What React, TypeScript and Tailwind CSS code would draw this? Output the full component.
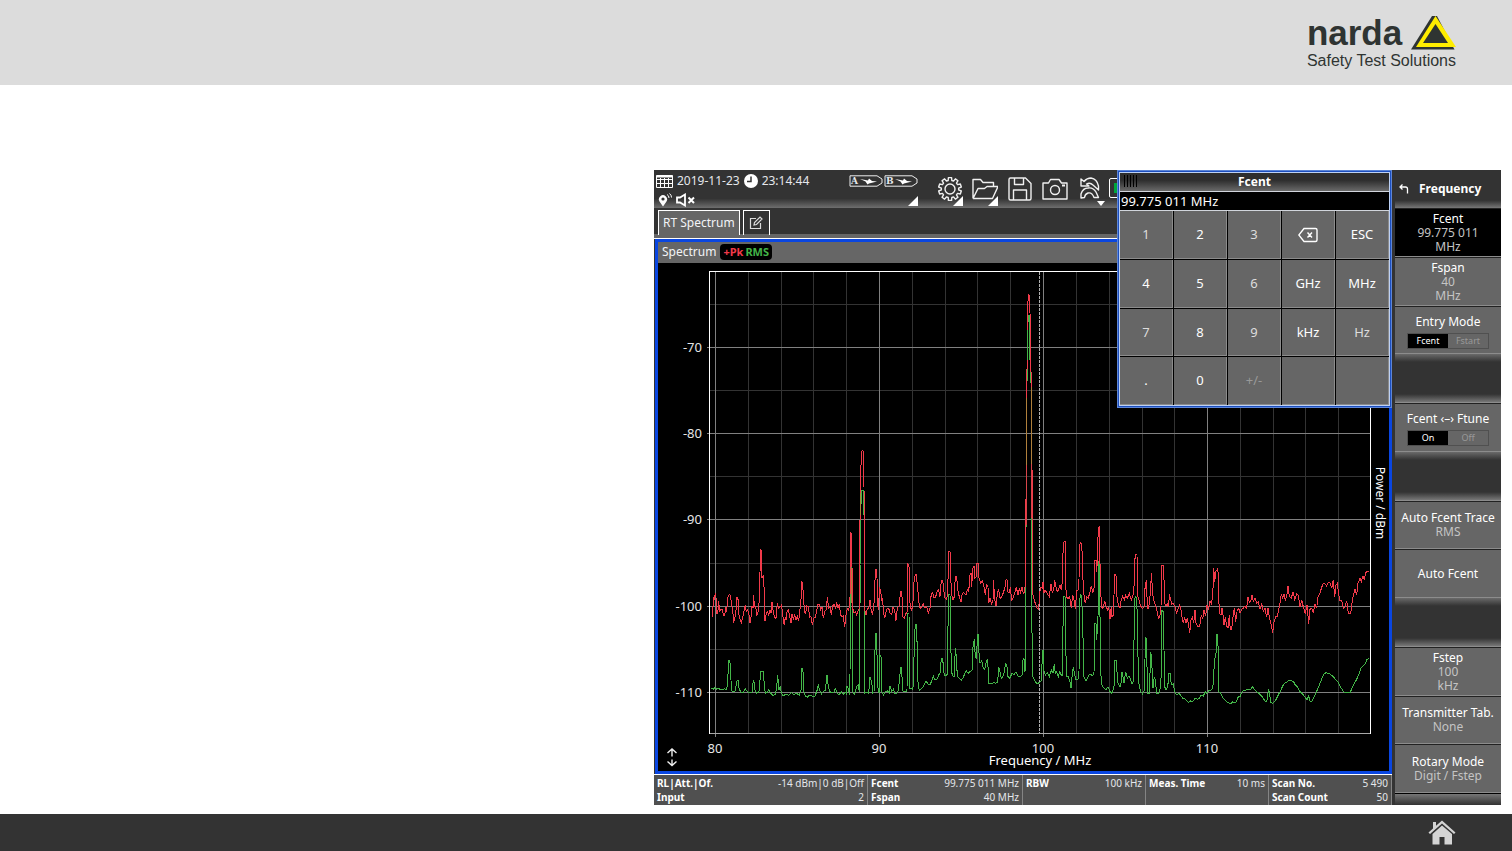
import type { ReactNode } from 'react';

// Trace vertices in thirds of a pixel, counted from the left end of the sweep
const redTrace = [
  {
    offset: 0,
    points:
      '185,348 188,348 190,292 193,300 196,278 198,292 200,340 203,342 206,304 209,335 212,328 218,330 220,345 224,345 227,322 230,335 233,292 237,284 242,286 244,312 248,330 251,368 255,350 258,330 261,292 265,300 267,345 270,358 274,368 280,345 284,322 286,316 289,335 293,328 297,345 300,370 303,350 306,318 309,325 311,286 313,318 317,320 320,345 323,342 326,318 329,290 331,148 333,150 336,235 340,226 343,275 345,362 348,345 352,335 356,345 360,330 363,340 366,306 370,335 374,352 378,355 382,310 386,325 390,322 394,316 397,330 400,358 403,376 406,350 408,360 411,335 415,330 419,350 423,370 426,342 430,358 434,345 438,360 442,348 446,364 449,330 452,320 455,247 458,250 460,290 464,338 467,340 470,318 475,320 479,352 483,350 487,376 491,355 496,352 500,330 504,312 508,312 512,330 516,322 520,355 524,335 529,328 532,292 536,325 540,320 544,345 548,318 552,312 556,325 560,310 564,325 568,312 572,345 576,350 580,348 584,382 588,345 592,325 596,330 600,300 601,98 605,100 606,200 608,325 612,340 616,335 620,345 625,330 629,325 630,60 632,-60 634,-145 637,-149 640,-145 642,-40 643,210 644,330 648,345 652,325 656,325 660,300 664,335 668,342 672,310 675,240 678,208 681,235 683,318 686,330 688,260 692,275 695,300 698,295 700,335 704,355 708,335 712,325 716,325',
  },
  {
    offset: 720,
    points:
      '0,340 5,345 9,322 14,330 18,362 22,325 27,318 30,290 33,273 36,290 38,350 43,355 47,342 51,338 53,188 57,200 60,310 64,330 68,322 72,245 76,222 80,225 82,265 85,280 88,320 92,325 96,318 100,312 105,325 110,320 115,340 120,325 124,280 128,278 132,295 137,290 141,275 146,270 150,290 154,240 158,240 161,270 165,295 170,298 173,275 176,155 180,155 182,230 185,285 189,300 193,290 196,228 200,230 203,270 208,290 213,305 217,280 222,278 228,285 232,270 236,275 240,225 243,218 245,260 248,205 252,197 255,235 258,230 261,190 265,190 267,235 272,250 277,242 282,260 286,285 290,252 294,262 296,308 300,295 305,312 309,300 311,240 313,290 318,318 323,275 326,270 330,295 335,290 340,278 345,262 348,240 351,238 353,275 357,280 361,262 365,300 370,292 375,275 379,262 384,285 388,265 392,278 396,262 400,280 404,275 407,230 409,-200 409,-305 412,-430 413,-590 416,-615 419,-612 420,-560 422,-430 424,-340 426,-100 427,55 428,280 432,298 436,310 441,325 446,328 449,275 453,262 457,265 459,245 461,280 465,270 469,275 474,285 478,290 483,252 487,278 491,270 494,240 498,262 502,275 506,268 510,255 514,270 517,245 519,160 522,125 526,125 527,250 529,290 534,295 539,290 544,325 548,285 552,300 556,328 560,272 564,270 567,240 568,135 573,128 577,160 579,240 582,285 586,310 590,290 595,295 600,275 604,258 608,278 612,265 615,180 618,180 620,215 622,180 625,85 628,82 629,160 632,260 634,320 639,325 644,302 648,318 652,330 656,322 660,358 664,320 666,350 670,345 672,285 674,223 678,226 679,265 682,300 686,318 690,325 694,298 698,288 703,300 707,285 712,295 718,280 724,300 729,285 732,260 734,190 736,163 741,165 742,240 744,290',
  },
  {
    offset: 1440,
    points:
      '30,312 34,322 38,325 42,322 46,250 49,245 51,290 54,328 58,310 62,270 64,220 67,260 70,300 74,308 78,322 82,335 86,358 90,345 93,320 95,195 99,195 102,240 104,310 108,318 112,312 116,322 118,282 121,295 125,312 130,310 135,322 140,340 145,325 149,315 152,325 156,350 160,370 164,352 168,370 172,355 175,370 179,398 183,360 187,352 191,370 195,330 198,370 203,380 209,378 214,345 218,358 222,330 227,348 231,315 236,328 240,302 244,310 248,290 251,205 254,245 257,215 262,208 264,215 266,300 269,342 273,345 276,325 279,345 282,375 286,352 290,378 294,385 298,345 301,390 305,388 309,352 313,325 317,365 322,328 326,325 330,340 335,328 340,325 345,318 350,325 354,290 358,308 362,305 366,285 370,305 375,295 380,310 385,305 390,328 395,312 400,335 405,325 410,352 414,325 418,350 423,372 428,398 432,365 437,350 442,350 446,328 450,310 454,282 458,295 462,282 466,300 470,290 474,258 478,290 484,295 489,275 494,298 500,282 505,285 510,320 515,300 520,320 526,342 531,315 536,372 540,328 545,325 550,340 555,312 560,325 564,290 570,278 575,262 580,250 585,252 590,258 595,246 600,248 605,265 610,240 614,290 618,255 622,250 626,285 630,302 635,300 640,325 645,322 650,302 655,340 662,342 666,310 670,285 675,268 680,285 684,250 690,235 694,245 699,228 703,240 707,218 711,215 716,216',
  },
];

const greenTrace = [
  {
    offset: 0,
    points:
      '183,565 190,568 196,562 200,568 206,565 212,570 218,568 224,566 230,570 233,545 235,500 237,480 240,490 243,540 244,572 250,575 256,572 260,545 264,540 267,565 272,576 280,578 286,566 290,572 296,578 302,578 307,575 310,540 312,545 315,570 320,580 327,575 331,530 333,514 340,514 343,555 346,580 352,578 356,570 362,580 368,586 376,584 380,560 383,525 387,570 391,558 394,580 400,588 408,582 416,586 424,578 432,584 440,580 448,586 453,570 456,505 460,520 462,575 466,588 472,592 478,585 486,588 494,590 500,575 505,556 509,570 514,582 520,574 526,572 531,525 535,560 540,575 546,578 551,578 556,566 562,580 568,584 574,575 580,584 585,575 590,582 591,558 596,570 598,584 600,540 601,202 606,205 606,460 608,575 614,584 620,558 625,555 628,575 629,370 630,195 632,45 634,-20 636,-30 641,-30 642,45 643,420 643,580 650,576 656,580 660,530 665,545 668,580 672,575 675,450 678,400 680,420 683,560 687,580 690,465 693,470 696,575 700,585 706,575 712,572 718,580',
  },
  {
    offset: 720,
    points:
      '0,558 5,575 10,568 14,580 20,582 26,570 28,535 33,502 36,530 38,572 46,576 51,575 52,400 53,340 57,342 58,480 60,565 68,568 71,550 73,400 77,374 80,375 82,470 83,540 88,572 96,565 104,552 108,542 114,552 120,555 126,540 130,528 134,538 140,540 146,525 150,520 154,475 158,475 161,515 165,528 170,525 173,520 174,380 176,283 180,285 182,400 184,515 190,530 193,530 196,445 199,470 202,528 208,535 214,540 220,532 225,520 229,512 234,520 240,515 246,510 249,440 253,418 256,470 260,475 262,405 265,404 267,460 270,490 275,482 280,505 284,508 288,490 292,478 294,500 296,550 302,552 310,548 318,550 323,545 326,500 330,515 334,535 338,530 343,515 347,488 351,500 354,530 360,535 366,518 372,525 378,515 384,528 390,530 396,525 399,480 402,475 404,515 406,510 408,90 409,-100 411,-350 413,-510 415,-555 419,-555 420,-430 424,-330 425,55 426,400 428,530 434,542 442,552 450,546 455,540 457,450 460,450 461,510 466,525 472,518 478,530 484,510 489,520 493,492 496,520 500,515 505,530 509,515 514,525 517,525 519,380 521,290 525,290 527,400 529,530 534,528 540,545 543,565 547,520 550,502 554,525 558,540 564,538 567,515 569,300 572,285 575,290 577,350 580,440 582,530 588,542 594,530 600,522 608,528 612,520 613,420 615,370 618,370 620,420 624,350 626,185 629,185 630,350 632,520 636,555 642,565 648,570 654,560 660,575 666,580 672,560 674,480 678,480 681,515 684,550 690,560 694,545 696,515 700,535 702,548 707,515 712,535 717,528 722,540 726,552 730,545 734,300 736,290 740,292 743,400 745,540',
  },
  {
    offset: 1440,
    points:
      '30,568 32,575 38,582 43,570 45,480 46,412 49,415 51,500 54,580 58,580 60,520 62,460 65,465 67,540 69,565 73,530 76,540 80,580 86,582 91,565 94,520 96,330 100,335 102,450 104,560 108,570 113,560 117,520 120,520 124,555 130,552 134,575 140,584 146,580 152,586 158,595 164,596 170,602 176,608 180,602 184,606 190,602 196,595 202,598 208,596 214,585 220,588 226,575 231,580 236,572 242,572 248,565 251,530 253,485 258,460 260,404 262,404 265,450 266,575 272,580 278,592 284,600 290,605 296,608 302,612 308,605 314,608 320,604 325,590 330,590 335,578 341,570 348,570 356,568 362,568 367,560 373,568 380,575 386,580 392,585 398,592 404,602 410,606 414,580 416,568 419,585 423,608 428,610 434,605 440,595 446,582 452,572 458,558 464,550 470,546 476,542 482,542 490,544 496,555 502,560 508,572 514,578 520,585 526,592 531,600 536,588 540,604 546,604 552,590 558,578 564,565 570,550 576,535 582,522 588,518 596,520 604,525 612,532 618,540 624,545 630,558 636,568 642,576 650,578 660,578 666,565 672,552 680,538 688,520 694,502 700,498 706,492 710,478 716,476',
  },
];

function toPolyline(segments: { offset: number; points: string }[]) {
  return segments
    .map((segment) =>
      segment.points
        .split(' ')
        .map((pair) => {
          const [x, y] = pair.split(',').map(Number);
          return `${((x + segment.offset) / 3 - 8).toFixed(1)},${(y / 3 + 237).toFixed(1)}`;
        })
        .join(' ')
    )
    .join(' ');
}

const minorX = [90, 123, 155, 188, 254, 287, 319, 352, 418, 451, 484, 516, 582, 615, 647, 680];
const majorX = [
  { x: 57, label: '80' },
  { x: 221, label: '90' },
  { x: 385, label: '100' },
  { x: 549, label: '110' },
];
const minorY = [41, 127, 213, 300, 386];
const majorY = [
  { y: 84, label: '-70' },
  { y: 170, label: '-80' },
  { y: 256, label: '-90' },
  { y: 343, label: '-100' },
  { y: 429, label: '-110' },
];

function Chart() {
  return (
    <svg viewBox="0 0 731 508" className="block w-full overflow-visible bg-black" role="img" aria-label="Spectrum">
      <g shapeRendering="crispEdges" fill="none">
        <g stroke="#333">
          {minorX.map((x) => (
            <line key={x} x1={x + 0.5} x2={x + 0.5} y1="9" y2="470" />
          ))}
          {minorY.map((y) => (
            <line key={y} x1="52" x2="712" y1={y + 0.5} y2={y + 0.5} />
          ))}
        </g>
        <g stroke="#808080">
          {majorX.map(({ x }) => (
            <line key={x} x1={x + 0.5} x2={x + 0.5} y1="9" y2="474" />
          ))}
          {majorY.map(({ y }) => (
            <line key={y} x1="49" x2="712" y1={y + 0.5} y2={y + 0.5} />
          ))}
        </g>
        <path d="M51.5 470.5H712" stroke="#a8a8a8" />
        <path d="M51.5 471V8.5H712.5V471" stroke="#fff" />
        <line x1="381.5" x2="381.5" y1="9" y2="470" stroke="#b0b0b0" strokeDasharray="3 1" />
        <polyline points={toPolyline(greenTrace)} stroke="#43b548" />
        <polyline points={toPolyline(redTrace)} stroke="#f23a4a" />
        {/* both traces run over each other on the flanks of the strong carriers */}
        <path d="M202.5 230V252M193.500 305V340M368.5 135V202M373.5 124V201" stroke="#b0803c" />
        <path d="M205.5 228V249M369.5 67V97M371.5 55V97M202.500 302V340M440.500 300V350" stroke="#43b548" />
        <path d="M368.5 202V262M373.5 201V255" stroke="#d8454a" />
      </g>
      <g fill="#e6e6e6" fontFamily="Noto Sans, sans-serif" fontSize="13">
        {majorY.map(({ y, label }) => (
          <text key={label} x="44" y={y + 5} textAnchor="end">
            {label}
          </text>
        ))}
        {majorX.map(({ x, label }) => (
          <text key={label} x={x} y="490" textAnchor="middle">
            {label}
          </text>
        ))}
        <text x="382" y="502" textAnchor="middle" fill="#fff">
          Frequency / MHz
        </text>
        <text transform="translate(718 240) rotate(90)" textAnchor="middle" fill="#fff" fontSize="12">
          Power / dBm
        </text>
      </g>
      <path
        d="M14 493.500V486M9.500 490L14 486L18.500 490M14 496.500V502M9.500 498.500L14 502.500L18.500 498.500"
        stroke="#eee"
        fill="none"
        strokeWidth="1.4"
      />
    </svg>
  );
}

function Logo() {
  return (
    <a href="#home" className="flex flex-col font-['Liberation_Sans',sans-serif] text-[#2f3432]">
      <span className="flex items-end justify-between">
        <span className="text-[35px] leading-[36px] font-bold">narda</span>
        <svg viewBox="0 0 46 36" className="h-9 w-[46px]" aria-hidden="true">
          <path d="M22 1L1 34.500H44.500L27 1Z" fill="#2f3432" />
          <path d="M25.500 1L6 32H46Z" fill="#ffed00" />
          <path d="M25.500 9L13 28H38Z" fill="#2f3432" />
        </svg>
      </span>
      <span className="text-base leading-5 whitespace-nowrap">Safety Test Solutions</span>
    </a>
  );
}

function Battery({ name }: { name: string }) {
  return (
    <span className="relative flex h-3 w-[34px] items-center">
      <svg viewBox="0 0 34 12" className="h-3 w-[34px]" aria-hidden="true">
        <path d="M1 .8H28L33 4V8L28 11.200H1Z" fill="none" stroke="#eee" />
        <path d="M11 4L19 5.500L20 3.500L23 6L28 6.500L20 8.500L18.500 9.500L16.500 6.500Z" fill="#fff" />
      </svg>
      <span className="absolute left-0.5 font-['DejaVu_Serif',serif] text-[9px] leading-3 font-bold">{name}</span>
    </span>
  );
}

function Corner() {
  return (
    <svg viewBox="0 0 10 10" className="absolute right-1 bottom-0.5 size-2.5" aria-hidden="true">
      <path d="M10 0V10H0Z" fill="#fff" />
    </svg>
  );
}

function StatusInfo() {
  return (
    <div className="relative flex w-[268px] flex-col pl-0.5 text-[12px] text-gray-200">
      <div className="flex h-[21px] items-center gap-[3px]">
        <svg viewBox="0 0 18 14" className="h-3.5 w-[18px]" fill="none" stroke="#fff" aria-hidden="true">
          <path d="M.5 1.500H16.500V13.500H.5ZM.5 5.500H16.500M.5 9.500H16.500M4.500 4V13M8.500 4V13M12.500 4V13" />
          <path d="M.5 2.500H16.500" strokeWidth="2" />
        </svg>
        <span>2019-11-23</span>
        <svg viewBox="0 0 16 16" className="size-4" aria-hidden="true">
          <circle cx="8" cy="8" r="7" fill="#fff" />
          <path d="M8 3.500V8.500H4" fill="none" stroke="#333" strokeWidth="1.500" />
        </svg>
        <span>23:14:44</span>
        <div className="ml-auto flex gap-px pr-1">
          <Battery name="A" />
          <Battery name="B" />
        </div>
      </div>
      <div className="flex h-[17px] items-center gap-0.5 pl-0.5">
        <svg viewBox="0 0 16 14" className="h-3.5 w-4" aria-hidden="true">
          <path d="M5 13.500L1.500 8.500A4.100 4.100 0 1 1 8.500 8.500Z" fill="#fff" />
          <circle cx="5" cy="6" r="1.600" fill="#333" />
          <path d="M9 1.500Q11 2.500 11 5M11.500 .5Q13.500 2 13.500 4.500" fill="none" stroke="#fff" />
        </svg>
        <svg viewBox="0 0 20 14" className="h-3.5 w-5" fill="none" stroke="#fff" aria-hidden="true">
          <path d="M1 4.500H4L9 1.500V12.500L4 9.500H1Z" strokeWidth="1.800" />
          <path d="M12.500 4.500L18 10M18 4.500L12.500 10" strokeWidth="2" />
        </svg>
      </div>
      <Corner />
    </div>
  );
}

const gearTeeth = [0, 36, 72, 108, 144, 180, 216, 252, 288, 324];

function gearPath() {
  return gearTeeth
    .map((deg, i) => {
      const at = (r: number, d: number) => {
        const a = ((deg + d) * Math.PI) / 180;
        return `${(13 + r * Math.sin(a)).toFixed(2)} ${(13 - r * Math.cos(a)).toFixed(2)}`;
      };
      return `${i ? 'L' : 'M'}${at(8.700, -12)}L${at(11.500, -8)}L${at(11.500, 8)}L${at(8.700, 12)}`;
    })
    .join('');
}

const tools: { name: string; mark?: 'corner' | 'down'; icon: ReactNode }[] = [
  {
    name: 'Settings',
    mark: 'corner',
    icon: (
      <>
        <path d={`${gearPath()}Z`} />
        <circle cx="13" cy="13" r="5" />
      </>
    ),
  },
  {
    name: 'Open',
    mark: 'corner',
    icon: <path d="M1 22.500V3.500H8.500L11 6.500H21.500V10.500M1 22.500H20.500L26 10.500H15L12.500 12.500H6L1 22.500" />,
  },
  {
    name: 'Save',
    icon: <path d="M3.500 2H18.500L24 7.500V22.500Q24 24 22.500 24H3.500Q2 24 2 22.500V3.500Q2 2 3.500 2ZM7.500 2V8.500H16.500V2M6.500 24V14H19.500V24" />,
  },
  {
    name: 'Screenshot',
    icon: (
      <>
        <path d="M1 7H6.500L8.500 3.500H17L19.500 7H25V23H1Z" />
        <circle cx="13" cy="14" r="4.500" />
        <path d="M20 9.500H23" strokeWidth="2" />
      </>
    ),
  },
  {
    name: 'Undo',
    mark: 'down',
    icon: (
      <>
        <path d="M4 3V10H12L9.500 8Q13 6 16 9L21.500 14V10Q20 3 14 2Q10 2 7 5.500Z" />
        <path d="M4 22V18Q6 12 11 12Q16 11 19 16L21.500 21.500H17Q15 16 11 17Q8 18 7.500 21.500Z" />
      </>
    ),
  },
];

function Toolbar() {
  return (
    <div className="flex">
      {tools.map((tool) => (
        <button key={tool.name} aria-label={tool.name} className="relative flex h-[38px] w-[35px] items-center justify-center">
          <svg viewBox="0 0 26 26" className="size-[26px]" fill="none" stroke="#f0f0f0" strokeWidth="1.400" strokeLinejoin="round">
            {tool.icon}
          </svg>
          {tool.mark === 'corner' && <Corner />}
          {tool.mark === 'down' && (
            <svg viewBox="0 0 8 5" className="absolute right-0.5 bottom-0.5 h-[5px] w-2">
              <path d="M0 0H8L4 5Z" fill="#fff" />
            </svg>
          )}
        </button>
      ))}
      <span className="mt-2 ml-0.5 h-5 w-8 rounded-xs border border-white p-1">
        <span className="block h-full bg-green-600" />
      </span>
    </div>
  );
}

const keys = ['1', '2', '3', 'back', 'ESC', '4', '5', '6', 'GHz', 'MHz', '7', '8', '9', 'kHz', 'Hz', '.', '0', '+/-', '', ''];

function Keypad() {
  return (
    <div className="absolute top-0 right-[109px] flex h-[238px] w-[275px] flex-col border border-[#5d85d6] bg-[#1c4fc0] p-px">
      <div className="flex flex-1 flex-col border border-[#bcd0f4] bg-black">
        <div className="relative flex h-[18px] items-center justify-center bg-linear-to-b from-[#2e2e2e] from-40% to-[#6a6a6a]">
          <span className="absolute top-0.5 left-1 flex gap-0.5">
            {[0, 1, 2, 3, 4].map((i) => (
              <span key={i} className="h-3 w-px bg-black" />
            ))}
          </span>
          <span className="text-[12px] font-bold text-white">Fcent</span>
        </div>
        <input
          aria-label="Fcent"
          defaultValue="99.775 011 MHz"
          className="h-5 w-full border-y border-gray-300 bg-black px-px text-[13px] text-white outline-none"
        />
        <div className="grid flex-1 grid-cols-5 gap-px">
          {keys.map((key, i) => (
            <button
              key={i}
              aria-label={key === 'back' ? 'Backspace' : undefined}
              className={`flex items-center justify-center border-r border-b border-[#8c8c8c] bg-[#666] pt-px text-[13px] ${
                key === '+/-' ? 'text-[#999]' : ['1', '3', '6', '7', '9', 'Hz'].includes(key) ? 'text-[#ddd]' : 'text-white'
              }`}
            >
              {key === 'back' ? (
                <svg viewBox="0 0 20 16" className="h-4 w-5" fill="none" stroke="#fff" strokeWidth="1.400">
                  <path d="M6 1.500H17.500Q19 1.500 19 3V13Q19 14.500 17.500 14.500H6L.8 8ZM9.500 5.500L14 10.500M14 5.500L9.500 10.500" />
                </svg>
              ) : (
                key
              )}
            </button>
          ))}
        </div>
      </div>
    </div>
  );
}

type SoftKey = { title?: string; lines?: string[]; options?: string[]; active?: boolean };

const softKeys: SoftKey[] = [
  { title: 'Fcent', lines: ['99.775 011', 'MHz'], active: true },
  { title: 'Fspan', lines: ['40', 'MHz'] },
  { title: 'Entry Mode', options: ['Fcent', 'Fstart'] },
  {},
  { title: 'Fcent ‹–› Ftune', options: ['On', 'Off'] },
  {},
  { title: 'Auto Fcent Trace', lines: ['RMS'] },
  { title: 'Auto Fcent' },
  {},
  { title: 'Fstep', lines: ['100', 'kHz'] },
  { title: 'Transmitter Tab.', lines: ['None'] },
  { title: 'Rotary Mode', lines: ['Digit / Fstep'] },
];

function SoftKeyCell({ item }: { item: SoftKey }) {
  if (!item.title) {
    return (
      <div className="flex flex-col justify-between border-b border-[#8c8c8c] bg-[#333]">
        <div className="h-2 bg-linear-to-b from-[#6a6a6a] to-[#333]" />
        <div className="h-2 bg-linear-to-b from-[#333] to-[#777]" />
      </div>
    );
  }
  const frame = 'flex flex-col items-center justify-center border-t border-b border-t-[#222] border-b-[#8c8c8c] text-[12px] leading-[14px]';
  if (item.options) {
    return (
      <div className={`${frame} gap-1 bg-[#666] pt-1 text-white`}>
        <span>{item.title}</span>
        <div className="flex border border-[#505050] text-[9px]">
          <button className="h-3.5 w-10 bg-black">{item.options[0]}</button>
          <button className="h-3.5 w-10 text-[#999]">{item.options[1]}</button>
        </div>
      </div>
    );
  }
  return (
    <button className={`${frame} ${item.active ? 'bg-black' : 'bg-[#666]'} pt-px text-white`}>
      <span className="whitespace-nowrap">{item.title}</span>
      {item.lines?.map((line) => (
        <span key={line} className="text-[#c4c4c4]">
          {line}
        </span>
      ))}
    </button>
  );
}

function Sidebar() {
  return (
    <nav className="flex w-[109px] flex-col bg-[#333] pl-[3px]">
      <button className="flex h-[38px] items-center gap-2.5 bg-linear-to-b from-[#333] from-80% to-[#777] pl-1 text-[12px] font-bold text-white">
        <svg viewBox="0 0 10 10" className="size-2.5" fill="none" stroke="#fff" strokeWidth="1.300">
          <path d="M3.500 .5L1 3L3.500 5.500M1 3H6.500Q8.500 3 8.500 5V9.500" />
        </svg>
        Frequency
      </button>
      <div className="grid flex-1 auto-rows-fr">
        {softKeys.map((item, i) => (
          <SoftKeyCell key={i} item={item} />
        ))}
      </div>
      <div className="h-3 border-t border-black bg-linear-to-b from-[#777] to-[#333]" />
    </nav>
  );
}

const readings = [
  [
    ['RL|Att.|Of.', '-14 dBm|0 dB|Off'],
    ['Input', '2'],
  ],
  [
    ['Fcent', '99.775 011 MHz'],
    ['Fspan', '40 MHz'],
  ],
  [['RBW', '100 kHz']],
  [['Meas. Time', '10 ms']],
  [
    ['Scan No.', '5 490'],
    ['Scan Count', '50'],
  ],
];

function Readings() {
  return (
    <div className="grid h-[31px] grid-cols-[214fr_155fr_123fr_123fr_123fr] border-t border-white bg-[#505050] text-[10px] leading-[14px] text-gray-200">
      {readings.map((group, i) => (
        <dl key={i} className="border-r border-[#858585] px-[3px] pt-px">
          {group.map(([label, value]) => (
            <div key={label} className="flex justify-between whitespace-nowrap">
              <dt className="font-bold text-white">{label}</dt>
              <dd>{value}</dd>
            </div>
          ))}
        </dl>
      ))}
    </div>
  );
}

function Analyzer() {
  return (
    <section className="relative flex bg-[#333] font-['Noto_Sans',sans-serif]">
      <div className="flex min-w-0 flex-1 flex-col">
        <div className="flex h-[38px] gap-2.5 bg-linear-to-b from-[#333] from-75% to-[#6e6e6e]">
          <StatusInfo />
          <Toolbar />
        </div>
        <div className="flex h-[31px] items-start gap-[3px] border-b border-white bg-linear-to-b from-[#333] from-85% to-[#666] to-85% pt-0.5 pl-1">
          <button className="h-[25px] border border-b-0 border-white bg-[#666] px-1 text-[12px] text-gray-100">RT Spectrum</button>
          <button aria-label="Edit tabs" className="flex h-[25px] w-[27px] items-center justify-center border border-b-0 border-white">
            <svg viewBox="0 0 14 14" className="size-3.5" fill="none" stroke="#ddd" strokeWidth="1.200">
              <path d="M7 2.500H1.500V12.500H11.500V7M5 9L5.500 6.500L11 1L13 3L7.500 8.500Z" />
            </svg>
          </button>
        </div>
        <div className="ml-px flex flex-1 flex-col border-3 border-[#0a46e0] bg-black">
          <div className="flex h-[21px] items-center gap-1 bg-[#666] pb-0.5 pl-1 text-[12px] text-gray-100">
            Spectrum
            <span className="flex gap-0.5 rounded-sm bg-black px-[3px] text-[11px] leading-4 font-bold">
              <span className="text-[#f23a4a]">+Pk</span>
              <span className="text-[#43b548]">RMS</span>
            </span>
          </div>
          <Chart />
        </div>
        <Readings />
      </div>
      <Sidebar />
      <Keypad />
    </section>
  );
}

export default function App() {
  return (
    <div className="flex min-h-screen flex-col bg-white">
      <header className="flex h-[85px] items-center justify-end bg-[#dcdcdc] pr-14">
        <Logo />
      </header>
      <main className="grid flex-1 grid-cols-[654fr_847fr] pt-[85px] pr-[11px] pb-[9px]">
        <div />
        <Analyzer />
      </main>
      <footer className="flex h-[37px] items-center justify-end bg-[#333] pr-14">
        <a href="#home" aria-label="Home">
          <svg viewBox="0 0 28 25" className="h-[25px] w-7" fill="#d4d4d4">
            <path d="M14 .5L27.500 12.500L26 14L14 3.500L2 14L.5 12.500L5 8.500V2H8V5.800Z" />
            <path d="M14 5.500L24 14V24.500H16.500V17H11.500V24.500H4.500V14Z" />
          </svg>
        </a>
      </footer>
    </div>
  );
}
